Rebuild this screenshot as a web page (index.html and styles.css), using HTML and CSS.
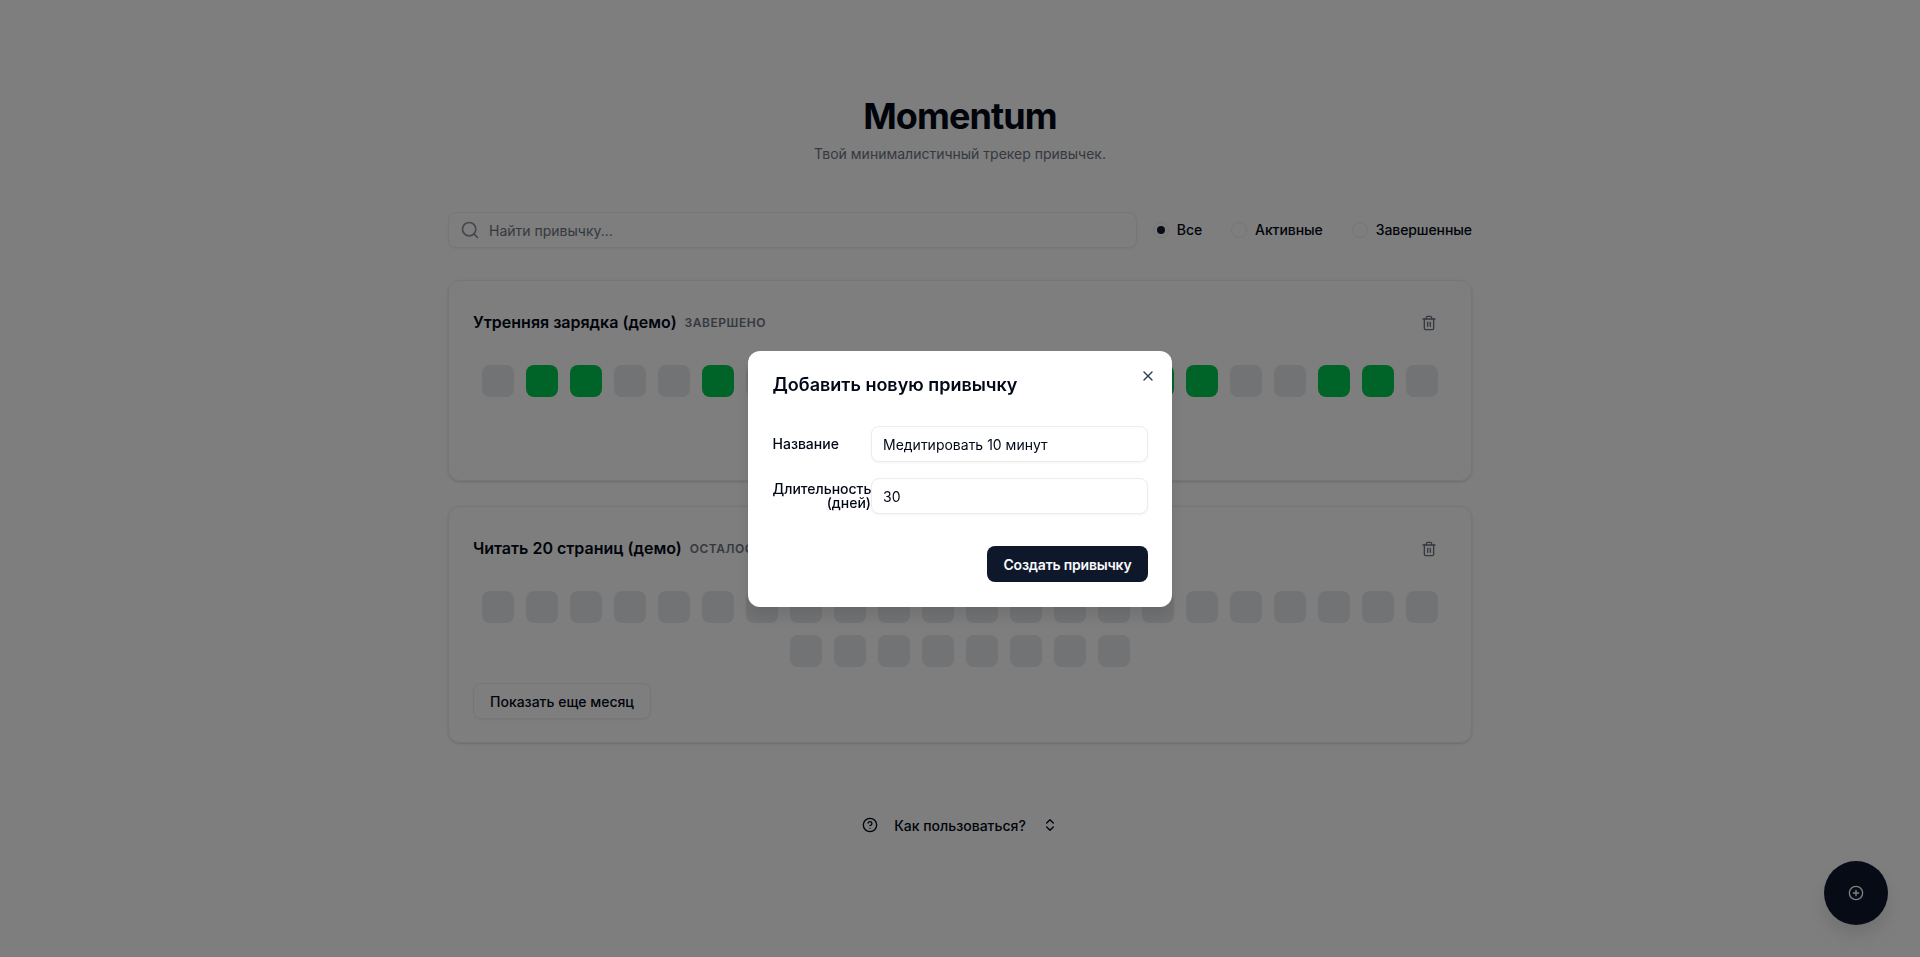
FILE: index.html
```html
<!DOCTYPE html>
<html lang="ru">
<head>
    <meta charset="UTF-8">
    <meta name="viewport" content="width=device-width, initial-scale=1.0">
    <title>Momentum</title>
    <link rel="stylesheet" href="styles.css">
</head>
<body>

    <div class="container">
        <!-- Header -->
        <header class="header">
            <h1>Momentum</h1>
            <p>Твой минималистичный трекер привычек.</p>
        </header>

        <!-- Search and filter -->
        <div class="controls">
            <div class="search">
                <svg class="icon search-icon" viewBox="0 0 24 24"><circle cx="11" cy="11" r="8"/><path d="m21 21-4.3-4.3"/></svg>
                <input type="text" placeholder="Найти привычку...">
            </div>
            <div class="filters">
                <label class="filter"><span class="radio checked"></span>Все</label>
                <label class="filter"><span class="radio"></span>Активные</label>
                <label class="filter"><span class="radio"></span>Завершенные</label>
            </div>
        </div>

        <!-- Habit cards -->
        <section class="card">
            <div class="card-head">
                <h3>Утренняя зарядка (демо)</h3>
                <span class="status">Завершено</span>
                <button class="trash">
                    <svg class="icon" viewBox="0 0 24 24"><path d="M3 6h18"/><path d="M19 6v14c0 1-1 2-2 2H7c-1 0-2-1-2-2V6"/><path d="M8 6V4c0-1 1-2 2-2h4c1 0 2 1 2 2v2"/><path d="M10 11v6"/><path d="M14 11v6"/></svg>
                </button>
            </div>
            <div class="days">
                <span class="day"></span><span class="day done"></span><span class="day done"></span><span class="day"></span><span class="day"></span><span class="day done"></span>
                <span class="day"></span><span class="day"></span><span class="day"></span><span class="day"></span><span class="day"></span><span class="day"></span>
                <span class="day"></span><span class="day"></span><span class="day"></span><span class="day done"></span><span class="day done"></span><span class="day"></span>
                <span class="day"></span><span class="day done"></span><span class="day done"></span><span class="day"></span>
            </div>
            <div class="card-foot"></div>
        </section>

        <section class="card">
            <div class="card-head">
                <h3>Читать 20 страниц (демо)</h3>
                <span class="status">Осталось 30 дней</span>
                <button class="trash">
                    <svg class="icon" viewBox="0 0 24 24"><path d="M3 6h18"/><path d="M19 6v14c0 1-1 2-2 2H7c-1 0-2-1-2-2V6"/><path d="M8 6V4c0-1 1-2 2-2h4c1 0 2 1 2 2v2"/><path d="M10 11v6"/><path d="M14 11v6"/></svg>
                </button>
            </div>
            <div class="days">
                <span class="day"></span><span class="day"></span><span class="day"></span><span class="day"></span><span class="day"></span><span class="day"></span>
                <span class="day"></span><span class="day"></span><span class="day"></span><span class="day"></span><span class="day"></span><span class="day"></span>
                <span class="day"></span><span class="day"></span><span class="day"></span><span class="day"></span><span class="day"></span><span class="day"></span>
                <span class="day"></span><span class="day"></span><span class="day"></span><span class="day"></span>
                <span class="day"></span><span class="day"></span><span class="day"></span><span class="day"></span>
                <span class="day"></span><span class="day"></span><span class="day"></span><span class="day"></span>
            </div>
            <button class="more-btn">Показать еще месяц</button>
        </section>

        <!-- Help -->
        <button class="help">
            <svg class="icon" viewBox="0 0 24 24"><circle cx="12" cy="12" r="10"/><path d="M9.09 9a3 3 0 0 1 5.83 1c0 2-3 3-3 3"/><path d="M12 17h.01"/></svg>
            Как пользоваться?
            <svg class="icon" viewBox="0 0 24 24"><path d="m7 15 5 5 5-5"/><path d="m7 9 5-5 5 5"/></svg>
        </button>
    </div>

    <!-- Add button -->
    <button class="fab">
        <svg class="icon" viewBox="0 0 24 24"><circle cx="12" cy="12" r="10"/><path d="M8 12h8"/><path d="M12 8v8"/></svg>
    </button>

    <!-- Dialog -->
    <div class="overlay"></div>
    <div class="modal">
        <button class="close">
            <svg class="icon" viewBox="0 0 24 24"><path d="M18 6 6 18"/><path d="m6 6 12 12"/></svg>
        </button>
        <h2>Добавить новую привычку</h2>
        <div class="fields">
            <div class="field">
                <label for="name">Название</label>
                <input type="text" id="name" value="Медитировать 10 минут">
            </div>
            <div class="field">
                <label for="days" class="label-right">Длительность (дней)</label>
                <input type="text" id="days" value="30">
            </div>
        </div>
        <div class="modal-foot">
            <button class="create-btn">Создать привычку</button>
        </div>
    </div>

</body>
</html>
```

FILE: styles.css
```css
/* General */
* {
    box-sizing: border-box;
}

body {
    font-family: Inter, "Noto Sans", sans-serif;
    background-color: #fbfcfb;
    color: #020817;
    margin: 0;
    height: 957px;
    overflow: hidden;
}

button {
    font-family: inherit;
    cursor: pointer;
}

.icon {
    width: 16px;
    height: 16px;
    fill: none;
    stroke: currentColor;
    stroke-width: 2;
    stroke-linecap: round;
    stroke-linejoin: round;
    flex-shrink: 0;
}

.container {
    width: 1024px;
    margin: 0 auto;
    padding-top: 96px;
}

/* Header */
.header {
    text-align: center;
    margin-bottom: 46px;
}

.header h1 {
    margin: 0;
    font-size: 36px;
    line-height: 40px;
    font-weight: 700;
    letter-spacing: -0.9px;
}

.header p {
    margin: 6px 0 0;
    font-size: 14px;
    line-height: 24px;
    color: #6b7280;
}

/* Search and filter */
.controls {
    display: flex;
    align-items: center;
    gap: 16px;
    margin-bottom: 32px;
}

.search {
    flex: 1;
    position: relative;
}

.search-icon {
    position: absolute;
    left: 12px;
    top: 8px;
    width: 20px;
    height: 20px;
    color: #8a8f98;
}

.search input {
    display: block;
    width: 100%;
    height: 36px;
    padding: 0 12px 0 40px;
    border: 1px solid #ececec;
    border-radius: 8px;
    background: transparent;
    box-shadow: 0 1px 2px rgba(0, 0, 0, 0.05);
    font-family: inherit;
    font-size: 14px;
}

.search input::placeholder {
    color: #6b7280;
}

.filters {
    display: flex;
    gap: 29px;
}

.filter {
    display: flex;
    align-items: center;
    gap: 8px;
    font-size: 14px;
    font-weight: 500;
    letter-spacing: -0.08px;
    line-height: 20px;
}

.radio {
    width: 16px;
    height: 16px;
    border: 1px solid #ececec;
    border-radius: 50%;
    display: flex;
    align-items: center;
    justify-content: center;
}

.radio.checked::after {
    content: "";
    width: 8px;
    height: 8px;
    border-radius: 50%;
    background-color: #0f172a;
}

/* Cards */
.card {
    border: 1px solid #ececec;
    border-radius: 12px;
    padding: 24px 24px 23px;
    margin-bottom: 25px;
    background: transparent;
    box-shadow: 0 1px 3px rgba(0, 0, 0, 0.1), 0 1px 2px rgba(0, 0, 0, 0.06);
}

.card-head {
    display: flex;
    align-items: center;
    gap: 8px;
    height: 34px;
    margin-bottom: 26px;
}

.card-head h3 {
    margin: 0;
    font-size: 16px;
    font-weight: 600;
}

.status {
    font-size: 12px;
    font-weight: 600;
    letter-spacing: 0.55px;
    text-transform: uppercase;
    color: #6b7280;
    padding-top: 1px;
}

.trash {
    margin-left: auto;
    width: 36px;
    height: 34px;
    border: none;
    background: none;
    color: #6b7280;
    display: flex;
    align-items: center;
    justify-content: center;
    padding: 2px 0 0;
}

.days {
    display: flex;
    flex-wrap: wrap;
    justify-content: center;
    gap: 12px;
}

.day {
    width: 32px;
    height: 32px;
    border-radius: 8px;
    background-color: #e5e7eb;
}

.day.done {
    background-color: #00c950;
}

.card-foot {
    height: 60px;
}

.more-btn {
    display: block;
    margin-top: 16px;
    height: 36px;
    padding: 0 16px;
    border: 1px solid #ececec;
    border-radius: 8px;
    background: transparent;
    color: #020817;
    font-size: 14px;
    font-weight: 500;
    box-shadow: 0 1px 2px rgba(0, 0, 0, 0.05);
}

/* Help */
.help {
    display: flex;
    align-items: center;
    gap: 16px;
    margin: 62px auto 0;
    height: 40px;
    border: none;
    background: none;
    color: #020817;
    font-size: 14px;
    font-weight: 500;
}

/* Add button */
.fab {
    position: fixed;
    right: 32px;
    bottom: 32px;
    width: 64px;
    height: 64px;
    border: none;
    border-radius: 50%;
    background-color: #0f172a;
    color: #fff;
    display: flex;
    align-items: center;
    justify-content: center;
    box-shadow: 0 10px 15px rgba(0, 0, 0, 0.1);
}

/* Dialog */
.overlay {
    position: fixed;
    inset: 0;
    background-color: rgba(0, 0, 0, 0.5);
}

.modal {
    position: fixed;
    left: 748px;
    top: 351px;
    width: 424px;
    height: 256px;
    padding: 24px 24.5px;
    background-color: #fff;
    border-radius: 12px;
    box-shadow: 0 10px 15px rgba(0, 0, 0, 0.1);
}

.modal h2 {
    margin: 0;
    font-size: 18px;
    line-height: 20px;
    font-weight: 600;
    color: #020817;
}

.close {
    position: absolute;
    right: 16px;
    top: 17px;
    padding: 0;
    border: none;
    background: none;
    color: #334155;
    display: flex;
}

.fields {
    display: flex;
    flex-direction: column;
    gap: 16px;
    margin-top: 31px;
}

.field {
    display: flex;
    align-items: center;
}

.field label {
    width: 98.5px;
    flex-shrink: 0;
    font-size: 14px;
    font-weight: 500;
    line-height: 14px;
}

.field .label-right {
    text-align: right;
}

.field input {
    flex: 1;
    min-width: 0;
    height: 36px;
    padding: 0 11px;
    border: 1px solid #ececec;
    border-radius: 8px;
    box-shadow: 0 1px 2px rgba(0, 0, 0, 0.05);
    font-family: inherit;
    font-size: 14px;
    color: #020817;
}

.modal-foot {
    display: flex;
    justify-content: flex-end;
    margin-top: 32px;
}

.create-btn {
    height: 36px;
    padding: 0 16px;
    border: none;
    border-radius: 8px;
    background-color: #0f172a;
    color: #f8fafc;
    font-size: 14px;
    font-weight: 600;
    letter-spacing: -0.2px;
}
```
